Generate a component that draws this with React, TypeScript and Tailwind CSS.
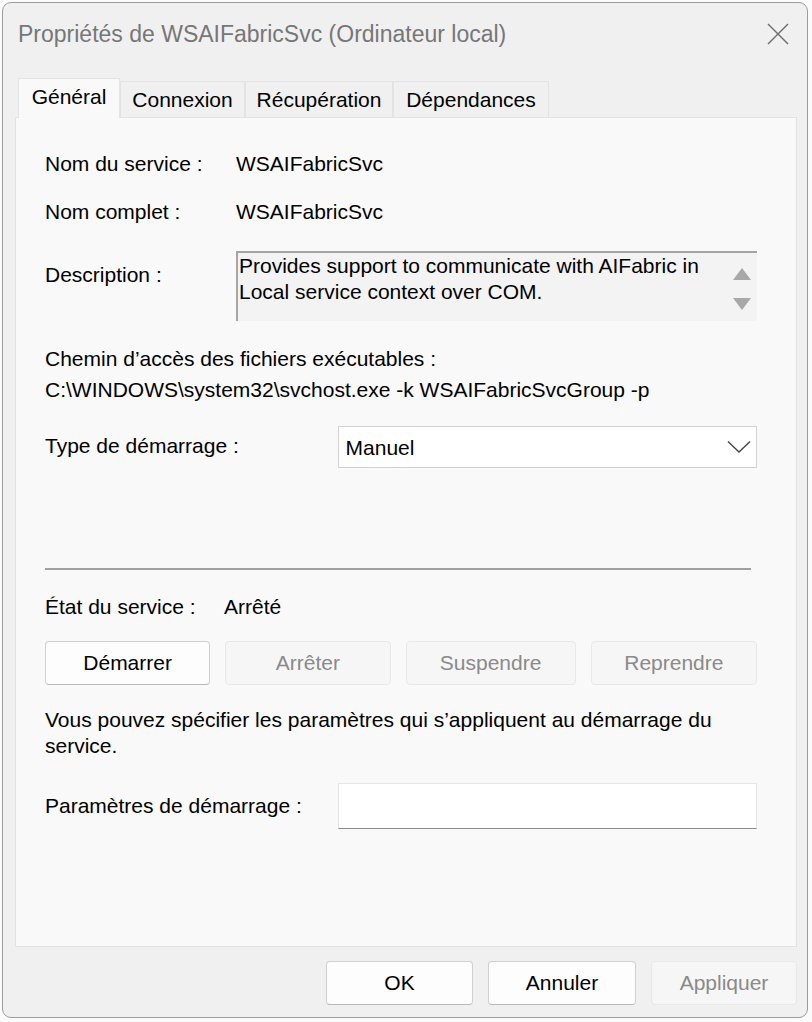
import React from 'react';

const font = { fontFamily: '"Liberation Sans", Arial, sans-serif' };

function Tab({ label, active, width }: { label: string; active?: boolean; width: string }) {
  return active ? (
    <div className={`${width} h-[40px] -mb-px z-10 flex items-center justify-center bg-[#f9f9f9] border border-b-0 border-[#e3e3e3] text-[21px] text-black`}>
      <span className="-mt-[3px]">{label}</span>
    </div>
  ) : (
    <div className={`${width} h-[37px] -mb-px flex items-center justify-center bg-[#f0f0f0] border border-[#e3e3e3] text-[21px] text-black`}>
      <span className="mt-[1px]">{label}</span>
    </div>
  );
}

function Btn({ label, disabled, width }: { label: string; disabled?: boolean; width: string }) {
  return (
    <div
      className={`${width} h-[44px] flex items-center justify-center rounded-[4px] text-[21px] ${
        disabled
          ? 'bg-[#f6f6f6] border border-[#e8e8e8] text-[#8a8a8a]'
          : 'bg-[#fdfdfd] border border-[#d0d0d0] border-b-[#b8b8b8] text-black'
      }`}
    >
      {label}
    </div>
  );
}

export default function App() {
  return (
    <div className="w-[812px] h-[1022px] bg-[#fbfbfb] overflow-hidden pt-[2px] pl-[2px]" style={font}>
      <div className="w-[806px] h-[1016px] rounded-[9px] border border-[#9c9c9c] bg-[#f0f0f0] flex flex-col">
        {/* barre de titre */}
        <div className="h-[64px] flex items-center justify-between pl-[15px] pr-[18px]">
          <span className="text-[23px] text-[#777777] -mt-[2px]">Propriétés de WSAIFabricSvc (Ordinateur local)</span>
          <svg width="22" height="22" viewBox="0 0 22 22" className="-mt-[3px]">
            <path d="M1 1 L21 21 M21 1 L1 21" stroke="#6b6b6b" strokeWidth="1.4" fill="none" />
          </svg>
        </div>

        {/* onglets */}
        <div className="flex items-end pl-[15px] h-[50px]">
          <Tab label="Général" active width="w-[102px]" />
          <Tab label="Connexion" width="w-[125px]" />
          <Tab label="Récupération" width="w-[148px]" />
          <Tab label="Dépendances" width="w-[156px]" />
        </div>

        {/* panneau */}
        <div className="ml-[12px] w-[782px] h-[830px] bg-[#f9f9f9] border border-[#e3e3e3] pl-[29px] pr-[39px] text-[21px] text-black">
          <div className="mt-[32px] h-[28px] flex items-center">
            <span className="w-[191px]">Nom du service :</span>
            <span>WSAIFabricSvc</span>
          </div>
          <div className="mt-[20px] h-[28px] flex items-center">
            <span className="w-[191px]">Nom complet :</span>
            <span>WSAIFabricSvc</span>
          </div>
          <div className="mt-[25px] flex">
            <span className="w-[191px] pt-[8px]">Description :</span>
            <div className="w-[521px] h-[70px] bg-[#f3f3f3] border-t-2 border-l-2 border-[#a5a5a5] flex">
              <div className="flex-1 pl-[1px] pt-[0px] leading-[26px]">
                Provides support to communicate with AIFabric in Local service context over COM.
              </div>
              <div className="w-[30px] flex flex-col items-center pt-[14px] gap-[16px]">
                <svg width="20" height="14" viewBox="0 0 20 14">
                  <path d="M10 1 L19 13 L1 13 Z" fill="#a8a8a8" />
                </svg>
                <svg width="20" height="14" viewBox="0 0 20 14">
                  <path d="M1 1 L19 1 L10 13 Z" fill="#a8a8a8" />
                </svg>
              </div>
            </div>
          </div>
          <div className="mt-[24px] h-[28px] flex items-center">Chemin d’accès des fichiers exécutables :</div>
          <div className="mt-[3px] h-[28px] flex items-center">C:\WINDOWS\system32\svchost.exe -k WSAIFabricSvcGroup -p</div>
          <div className="mt-[22px] flex items-center">
            <span className="w-[293px] -mt-[2px]">Type de démarrage :</span>
            <div className="w-[420px] h-[42px] bg-white border border-[#d2d2d2] flex items-center justify-between pl-[7px] pr-[5px]">
              <span className="mt-[1px]">Manuel</span>
              <svg width="24" height="14" viewBox="0 0 24 14">
                <path d="M1 1.5 L12 12 L23 1.5" stroke="#444" strokeWidth="1.4" fill="none" />
              </svg>
            </div>
          </div>
          <div className="mt-[100px] w-[706px] h-[2px] bg-[#a0a0a0]" />
          <div className="mt-[23px] h-[28px] flex items-center">
            <span className="w-[179px]">État du service :</span>
            <span>Arrêté</span>
          </div>
          <div className="mt-[20px] flex gap-[15px]">
            <Btn label="Démarrer" width="w-[166px]" />
            <Btn label="Arrêter" disabled width="w-[166px]" />
            <Btn label="Suspendre" disabled width="w-[171px]" />
            <Btn label="Reprendre" disabled width="w-[167px]" />
          </div>
          <div className="mt-[22px] leading-[26px] w-[690px]">
            Vous pouvez spécifier les paramètres qui s’appliquent au démarrage du service.
          </div>
          <div className="mt-[24px] flex items-center">
            <span className="w-[293px]">Paramètres de démarrage :</span>
            <div className="w-[420px] h-[46px] bg-white border border-[#e6e6e6] border-b-[#8a8a8a]" />
          </div>
        </div>

        {/* boutons du bas */}
        <div className="flex justify-end gap-[15px] pr-[10px] mt-[14px]">
          <Btn label="OK" width="w-[147px]" />
          <Btn label="Annuler" width="w-[148px]" />
          <Btn label="Appliquer" disabled width="w-[146px]" />
        </div>
      </div>
    </div>
  );
}
